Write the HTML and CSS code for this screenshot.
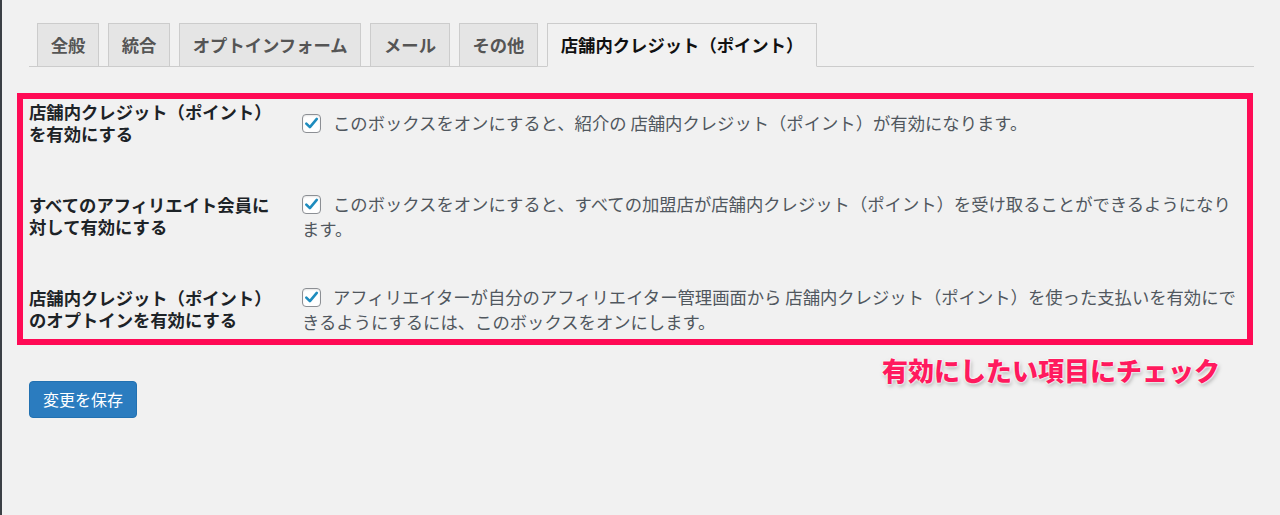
FILE: index.html
```html
<!DOCTYPE html>
<html lang="ja">
<head>
<meta charset="utf-8">
<title>店舗内クレジット（ポイント）</title>
<link rel="stylesheet" href="styles.css">
</head>
<body>
<div class="page">
  <div class="edge"></div>
  <main class="content">
    <nav class="tabs">
      <a class="tab">全般</a>
      <a class="tab">統合</a>
      <a class="tab">オプトインフォーム</a>
      <a class="tab">メール</a>
      <a class="tab">その他</a>
      <a class="tab active">店舗内クレジット（ポイント）</a>
    </nav>
    <section class="box">
      <div class="row row-first">
        <div class="label">店舗内クレジット（ポイント）を有効にする</div>
        <div class="desc"><span class="cb"><svg viewBox="0 0 19 19" width="19" height="19"><path d="M4.3 9.6 L7.9 13.2 L14.8 4.9" fill="none" stroke="#1e8cbe" stroke-width="2.6" stroke-linecap="round" stroke-linejoin="round"/></svg></span>このボックスをオンにすると、紹介の 店舗内クレジット（ポイント）が有効になります。</div>
      </div>
      <div class="row">
        <div class="label">すべてのアフィリエイト会員に対して有効にする</div>
        <div class="desc"><span class="cb"><svg viewBox="0 0 19 19" width="19" height="19"><path d="M4.3 9.6 L7.9 13.2 L14.8 4.9" fill="none" stroke="#1e8cbe" stroke-width="2.6" stroke-linecap="round" stroke-linejoin="round"/></svg></span>このボックスをオンにすると、すべての加盟店が店舗内クレジット（ポイント）を受け取ることができるようになります。</div>
      </div>
      <div class="row row-last">
        <div class="label">店舗内クレジット（ポイント）のオプトインを有効にする</div>
        <div class="desc"><span class="cb"><svg viewBox="0 0 19 19" width="19" height="19"><path d="M4.3 9.6 L7.9 13.2 L14.8 4.9" fill="none" stroke="#1e8cbe" stroke-width="2.6" stroke-linecap="round" stroke-linejoin="round"/></svg></span>アフィリエイターが自分のアフィリエイター管理画面から 店舗内クレジット（ポイント）を使った支払いを有効にできるようにするには、このボックスをオンにします。</div>
      </div>
    </section>
    <button class="save">変更を保存</button>
    <div class="note">有効にしたい項目にチェック</div>
  </main>
</div>
</body>
</html>
```
FILE: styles.css
```css
html, body {
  margin: 0;
  padding: 0;
  background: #f1f1f1;
}
body {
  font-family: "Noto Sans CJK JP", "Noto Sans", sans-serif;
  color: #23282d;
}
.page {
  display: flex;
  min-height: 515px;
}
.edge {
  width: 2px;
  background: #3b4045;
  flex: none;
}
.content {
  flex: 1;
  position: relative;
  padding: 23px 26px 0 15px;
}
.tabs {
  display: flex;
  gap: 9px;
  margin-left: 12px;
  padding-left: 8px;
  border-bottom: 1px solid #ccc;
  height: 43px;
}
.tab {
  box-sizing: border-box;
  height: 43px;
  padding: 0 12.7px;
  border: 1px solid #ccc;
  border-bottom: none;
  background: #e5e5e5;
  color: #555;
  font-size: 17.33px;
  font-weight: 700;
  line-height: 41px;
  white-space: nowrap;
}
.tab.active {
  background: #f1f1f1;
  color: #111;
  height: 44px;
  border-bottom: 1px solid #f1f1f1;
}
.box {
  margin: 26px 1px 0 0;
  border: 6px solid #ff0a55;
}
.row {
  display: flex;
  align-items: flex-start;
  height: 93px;
}
.row-last {
  height: 54px;
}
.label {
  box-sizing: content-box;
  width: 250px;
  padding: 0 23px 0 6px;
  margin-top: 2px;
  font-size: 17.33px;
  line-height: 22px;
  font-weight: 700;
  color: #1d2327;
  flex: none;
}
.desc {
  width: 942px;
  font-size: 17.33px;
  line-height: 25px;
  color: #50575e;
  margin-top: -1px;
}
.row-first .desc {
  margin-top: 11px;
}
.cb {
  display: inline-block;
  box-sizing: border-box;
  width: 19px;
  height: 19px;
  border: 1px solid #8c8f94;
  border-radius: 4px;
  background: #fff;
  box-shadow: inset 0 1px 2px rgba(0,0,0,0.1);
  margin-right: 12px;
  vertical-align: -3px;
  position: relative;
}
.cb svg {
  position: absolute;
  left: -1px;
  top: -1px;
}
.save {
  display: block;
  margin: 36px 0 0 12px;
  height: 37px;
  padding: 0 13px;
  border: 1px solid #2271b1;
  border-radius: 4px;
  background: #2b7cbf;
  color: #fff;
  font-family: "Noto Sans CJK JP", sans-serif;
  font-size: 16px;
  line-height: 35px;
}
.note {
  position: absolute;
  left: 880px;
  top: 357px;
  font-size: 26px;
  line-height: 26px;
  font-weight: 900;
  color: #ff1a5e;
  white-space: nowrap;
  text-shadow: 0 0 2px #fff, 0 0 2px #fff, 0 0 3px #fff, 1px 2px 4px rgba(0,0,0,0.35);
}
```
